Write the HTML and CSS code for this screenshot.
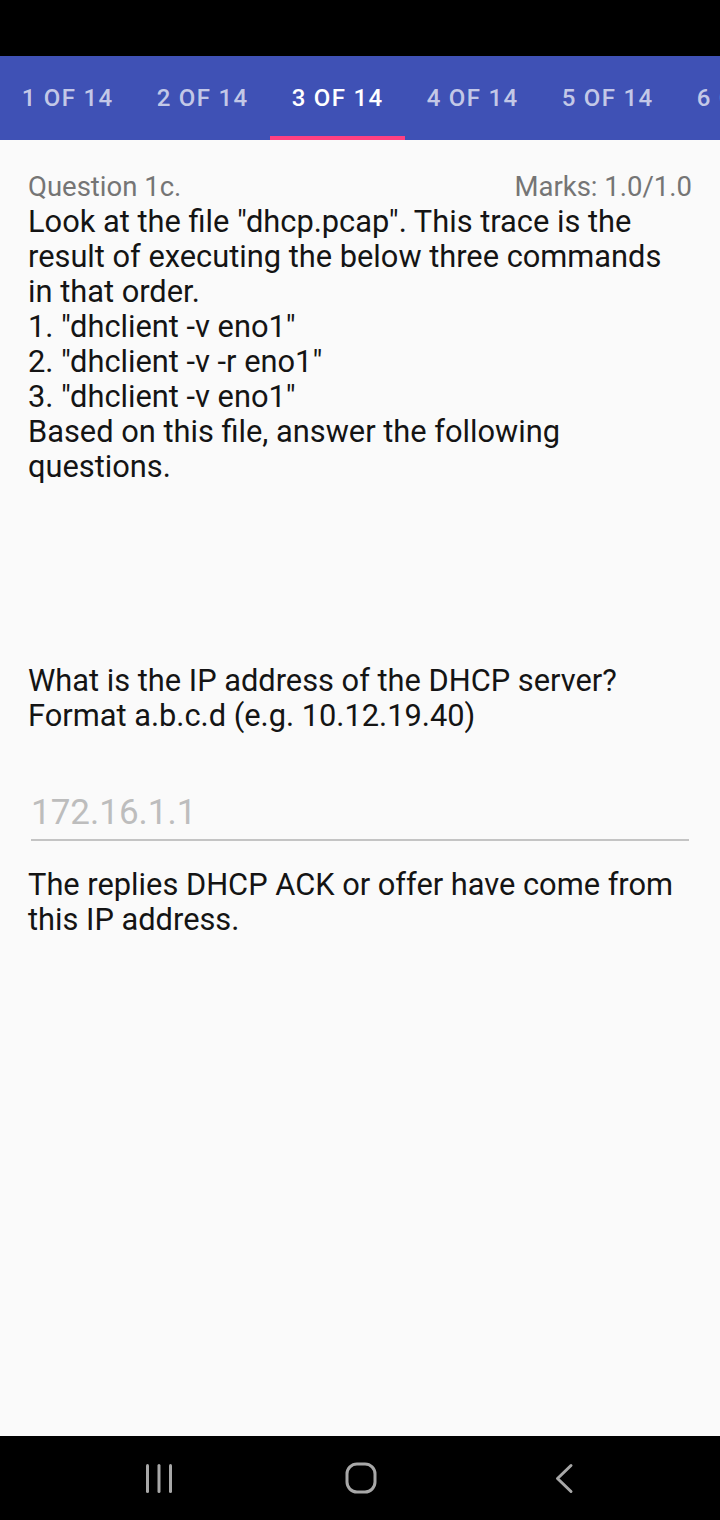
FILE: index.html
```html
<!DOCTYPE html>
<html>
<head>
<meta charset="utf-8">
<link rel="stylesheet" href="styles.css">
</head>
<body>
<div class="screen">
  <div class="status-bar"></div>
  <div class="tabs">
    <div class="tab">1 OF 14</div>
    <div class="tab">2 OF 14</div>
    <div class="tab active">3 OF 14</div>
    <div class="tab">4 OF 14</div>
    <div class="tab">5 OF 14</div>
    <div class="tab">6 OF 14</div>
  </div>
  <div class="content">
    <div class="q-header">
      <span>Question 1c.</span>
      <span>Marks: 1.0/1.0</span>
    </div>
    <div class="q-text">Look at the file "dhcp.pcap". This trace is the result of executing the below three commands in that order.<br>1. "dhclient -v eno1"<br>2. "dhclient -v -r eno1"<br>3. "dhclient -v eno1"<br>Based on this file, answer the following questions.</div>
    <div class="q-prompt">What is the IP address of the DHCP server?<br>Format a.b.c.d (e.g. 10.12.19.40)</div>
    <div class="answer-field">172.16.1.1</div>
    <div class="feedback">The replies DHCP ACK or offer have come from this IP address.</div>
  </div>
  <div class="nav-bar">
    <div class="nav-item">
      <svg width="40" height="40" viewBox="0 0 40 40"><g stroke="#a8a8a8" stroke-width="3" stroke-linecap="round"><line x1="8.5" y1="7.5" x2="8.5" y2="33.5"/><line x1="20" y1="7.5" x2="20" y2="33.5"/><line x1="31.5" y1="7.5" x2="31.5" y2="33.5"/></g></svg>
    </div>
    <div class="nav-item">
      <svg width="40" height="40" viewBox="0 0 40 40"><rect x="6" y="6" width="28" height="28" rx="10" ry="10" fill="none" stroke="#a8a8a8" stroke-width="3"/></svg>
    </div>
    <div class="nav-item">
      <svg width="40" height="40" viewBox="0 0 40 40"><polyline points="28,7.5 14.5,20.5 28,33.5" fill="none" stroke="#a8a8a8" stroke-width="3" stroke-linecap="round" stroke-linejoin="round"/></svg>
    </div>
  </div>
</div>
</body>
</html>
```

FILE: styles.css
```css
html, body {
  margin: 0;
  padding: 0;
}
body {
  width: 720px;
  height: 1520px;
  overflow: hidden;
  font-family: Roboto, "Noto Sans", sans-serif;
  background: #fafafa;
}
.screen {
  display: flex;
  flex-direction: column;
  height: 1520px;
}
.status-bar {
  height: 56px;
  background: #000;
  flex: none;
}
.tabs {
  height: 84px;
  flex: none;
  background: #3f51b5;
  display: flex;
  overflow: hidden;
}
.tab {
  flex: none;
  width: 135px;
  box-sizing: border-box;
  display: flex;
  align-items: center;
  justify-content: center;
  font-size: 24px;
  font-weight: 500;
  letter-spacing: 1.3px;
  color: rgba(255, 255, 255, 0.7);
  white-space: nowrap;
  border-bottom: 4px solid transparent;
  padding-top: 4px;
}
.tab.active {
  color: #fff;
  border-bottom-color: #ff4081;
}
.content {
  flex: 1;
  padding: 30px 28px 0 28px;
  color: #141414;
}
.q-header {
  display: flex;
  justify-content: space-between;
  font-size: 27.5px;
  line-height: 34px;
  color: #757575;
}
.q-text {
  font-size: 30.8px;
  line-height: 35px;
}
.q-prompt {
  margin-top: 179px;
  font-size: 30.8px;
  line-height: 35px;
}
.answer-field {
  margin: 46px 3px 0 3px;
  padding-top: 8px;
  font-size: 35px;
  line-height: 52px;
  height: 52px;
  color: #bdbdbd;
  border-bottom: 2px solid #c4c4c4;
}
.feedback {
  margin-top: 26px;
  font-size: 30.8px;
  line-height: 35px;
}
.nav-bar {
  height: 84px;
  flex: none;
  background: #000;
  display: flex;
  justify-content: center;
  align-items: center;
  gap: 161px;
}
.nav-item {
  width: 40px;
  height: 40px;
  display: flex;
  padding-left: 1px;
}
```
